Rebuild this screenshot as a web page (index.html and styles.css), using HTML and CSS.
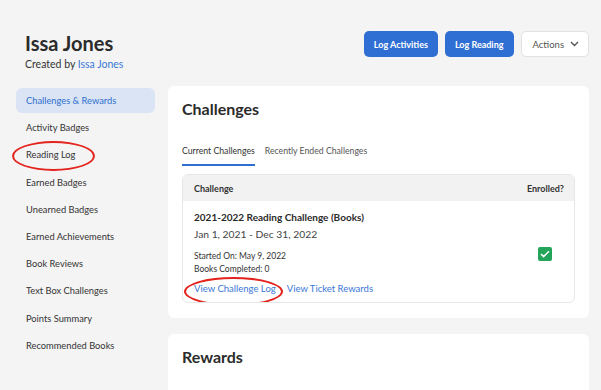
FILE: index.html
```html
<!DOCTYPE html>
<html lang="en">
<head>
  <meta charset="UTF-8" />
  <meta name="viewport" content="width=device-width, initial-scale=1.0" />
  <title>Issa Jones - Challenges</title>
  <link rel="stylesheet" href="styles.css">
</head>
<body>
  <div id="page">
    <div class="top-bar">
      <div class="profile">
        <h1>Issa Jones</h1>
        <p class="created">Created by <a href="#">Issa Jones</a></p>
      </div>
      <div class="actions">
        <button class="btn btn-primary">Log Activities</button>
        <button class="btn btn-primary">Log Reading</button>
        <button class="btn btn-light">Actions
          <svg width="9" height="6" viewBox="0 0 9 6"><path d="M1 1l3.5 3.5L8 1" fill="none" stroke="#555" stroke-width="1.4"/></svg>
        </button>
      </div>
    </div>

    <div class="layout">
      <ul class="side-nav">
        <li class="active">Challenges &amp; Rewards</li>
        <li>Activity Badges</li>
        <li class="marked">Reading Log<span class="circle circle-nav"></span></li>
        <li>Earned Badges</li>
        <li>Unearned Badges</li>
        <li>Earned Achievements</li>
        <li>Book Reviews</li>
        <li>Text Box Challenges</li>
        <li>Points Summary</li>
        <li>Recommended Books</li>
      </ul>

      <div class="main">
        <div class="card">
          <h2>Challenges</h2>
          <div class="tabs">
            <span class="tab current">Current Challenges</span>
            <span class="tab">Recently Ended Challenges</span>
          </div>
          <div class="table">
            <div class="table-head">
              <span>Challenge</span>
              <span>Enrolled?</span>
            </div>
            <div class="table-row">
              <div class="challenge-info">
                <div class="challenge-title">2021-2022 Reading Challenge (Books)</div>
                <div class="challenge-dates">Jan 1, 2021 - Dec 31, 2022</div>
                <div class="challenge-meta">Started On: May 9, 2022</div>
                <div class="challenge-meta">Books Completed: 0</div>
                <div class="links">
                  <a href="#" class="marked">View Challenge Log<span class="circle circle-link"></span></a>
                  <a href="#">View Ticket Rewards</a>
                </div>
              </div>
              <span class="check">
                <svg width="10" height="8" viewBox="0 0 10 8"><path d="M1 4l2.6 2.6L9 1.2" fill="none" stroke="#fff" stroke-width="1.5"/></svg>
              </span>
            </div>
          </div>
        </div>

        <div class="card card-tall">
          <h2>Rewards</h2>
        </div>
      </div>
    </div>
  </div>
</body>
</html>
```

FILE: styles.css
```css
body {
  margin: 0;
  background: #f4f4f4;
  font-family: Lato, "Open Sans", sans-serif;
  color: #333;
}
a {
  color: #3a78d8;
  text-decoration: none;
}
#page {
  padding: 31px 12px 0 16px;
}
.top-bar {
  display: flex;
  justify-content: space-between;
  align-items: flex-start;
  padding-left: 9px;
}
h1 {
  margin: 0;
  font-size: 20px;
  line-height: 24px;
  font-weight: 700;
  color: #2b2b2b;
}
.created {
  margin: 2px 0 0;
  font-size: 10.5px;
  line-height: 14px;
}
.actions {
  display: flex;
  gap: 7px;
}
.btn {
  height: 26px;
  padding: 0 10px;
  border-radius: 5px;
  font-family: inherit;
  font-size: 9px;
  font-weight: 700;
  cursor: pointer;
}
.btn-primary {
  background: #2f6fd4;
  color: white;
  border: none;
}
.btn-light {
  background: white;
  color: #555;
  border: 1px solid #e2e2e2;
  font-weight: 400;
  font-size: 9.5px;
  padding: 0 9px 0 11px;
  display: flex;
  align-items: center;
  gap: 6px;
}
.layout {
  display: flex;
  gap: 13px;
  margin-top: 15px;
}
.side-nav {
  list-style: none;
  margin: 2px 0 0;
  padding: 0;
  width: 139px;
  flex-shrink: 0;
}
.side-nav li {
  padding: 6px 10px 7px;
  font-size: 9.3px;
  line-height: 14.2px;
  border-radius: 6px;
  color: #333;
}
.side-nav li.active {
  background: #dae4f4;
  color: #2f6fd0;
  padding: 6px 10px 5px;
  margin-bottom: 2px;
}
.marked {
  position: relative;
}
.circle {
  position: absolute;
  box-sizing: border-box;
  border: 2.5px solid #e3231e;
  border-radius: 50%;
  pointer-events: none;
}
.circle-nav {
  left: -4px;
  top: -1.5px;
  width: 83px;
  height: 30px;
}
.circle-link {
  left: -10px;
  top: -5px;
  width: 99px;
  height: 29px;
}
.main {
  flex: 1;
  display: flex;
  flex-direction: column;
  gap: 16px;
}
.card {
  background: white;
  border-radius: 6px;
  padding: 13px 14px 15px;
}
.card-tall {
  min-height: 80px;
}
h2 {
  margin: 0;
  font-size: 16px;
  line-height: 20px;
  font-weight: 700;
  color: #2b2b2b;
}
.tabs {
  display: flex;
  gap: 10px;
  margin-top: 24.5px;
}
.tab {
  font-size: 8.7px;
  line-height: 13px;
  padding-bottom: 7.5px;
  color: #555;
}
.tab.current {
  color: #333;
  border-bottom: 2px solid #2f6fd4;
}
.table {
  margin-top: 8px;
  border: 1px solid #e6e6e6;
  border-radius: 6px;
  overflow: hidden;
}
.table-head {
  display: flex;
  justify-content: space-between;
  background: #f2f2f2;
  padding: 7px 10px 6px 11px;
  font-size: 9px;
  line-height: 13px;
  font-weight: 700;
  color: #333;
}
.table-row {
  display: flex;
  justify-content: space-between;
  align-items: center;
  padding: 9px 22px 6px 11px;
}
.challenge-title {
  font-size: 10px;
  line-height: 14px;
  font-weight: 700;
  color: #2b2b2b;
}
.challenge-dates {
  margin-top: 3px;
  margin-bottom: 8.5px;
  font-size: 10.3px;
  line-height: 14px;
  color: #444;
}
.challenge-meta {
  font-size: 8.5px;
  line-height: 13px;
  color: #333;
}
.links {
  display: flex;
  gap: 11px;
  margin-top: 6.5px;
  font-size: 9.5px;
  line-height: 14px;
}
.check {
  width: 14px;
  height: 14px;
  border-radius: 2px;
  background: #22a45a;
  display: flex;
  align-items: center;
  justify-content: center;
  margin-top: 2px;
}
```
